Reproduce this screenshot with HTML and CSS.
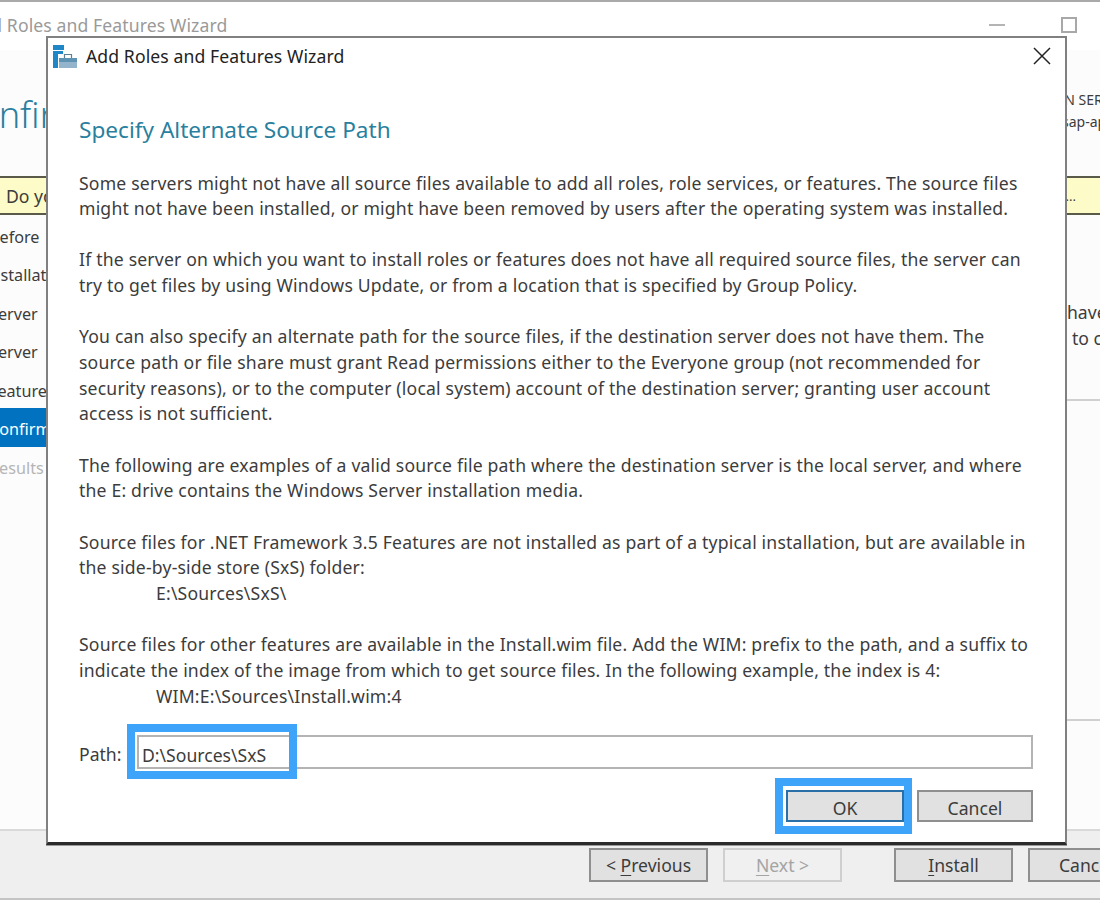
FILE: index.html
```html
<!DOCTYPE html>
<html lang="en">
<head>
<meta charset="utf-8">
<title>Add Roles and Features Wizard</title>
<link rel="stylesheet" href="styles.css">
</head>
<body>
<div class="window">
  <div class="win-title">
    <span class="win-title-text">Add Roles and Features Wizard</span>
    <span class="win-min"></span>
    <span class="win-max"></span>
  </div>
  <div class="win-main">
    <div class="win-head">
      <div class="win-heading">Confirmation</div>
      <div class="win-dest">DESTINATION SERVER<br><span class="win-host">sap-app</span></div>
    </div>
    <div class="win-banner">
      <span class="win-banner-text">Do you need to specify an alternate source path?</span>
      <span class="win-banner-more">...</span>
    </div>
    <div class="win-body">
      <ul class="steps">
        <li>Before You Begin</li>
        <li class="step-in">Installation Type</li>
        <li>Server Selection</li>
        <li>Server Roles</li>
        <li>Features</li>
        <li class="step-on">Confirmation</li>
        <li class="step-off">Results</li>
      </ul>
      <div class="win-right">
        <div class="win-right-a">have<br><span class="win-right-b">to c</span></div>
        <div class="win-right-c"></div>
      </div>
    </div>
  </div>
  <div class="win-foot">
    <button class="btn">&lt; <u>P</u>revious</button>
    <button class="btn btn-off"><u>N</u>ext &gt;</button>
    <button class="btn btn-install"><u>I</u>nstall</button>
    <button class="btn btn-clip">Cancel</button>
  </div>
</div>

<div class="dialog">
  <div class="dlg-title">
    <svg class="dlg-icon" viewBox="0 0 24 24" width="24" height="24" aria-hidden="true">
      <rect x="0" y="0" width="11" height="5" fill="#1f86c8"/>
      <rect x="0" y="6" width="10" height="3" fill="#1f86c8"/>
      <rect x="0" y="9" width="5" height="14" fill="#1f86c8"/>
      <path d="M6 13h18v4H6z" fill="#5f93b3"/>
      <path d="M6 17h18v6H6z" fill="#93b4ca"/>
      <path d="M11.5 13V9.5h7V13" fill="none" stroke="#5f7f95" stroke-width="1.2"/>
    </svg>
    <span class="dlg-title-text">Add Roles and Features Wizard</span>
    <svg class="dlg-close" viewBox="0 0 18 18" width="18" height="18" aria-hidden="true">
      <path d="M1 1l16 16M17 1L1 17" fill="none" stroke="#222" stroke-width="1.5"/>
    </svg>
  </div>
  <div class="dlg-body">
    <h2 class="dlg-h">Specify Alternate Source Path</h2>
    <p>Some servers might not have all source files available to add all roles, role services, or features. The source files<br>might not have been installed, or might have been removed by users after the operating system was installed.</p>
    <p>If the server on which you want to install roles or features does not have all required source files, the server can<br>try to get files by using Windows Update, or from a location that is specified by Group Policy.</p>
    <p>You can also specify an alternate path for the source files, if the destination server does not have them. The<br>source path or file share must grant Read permissions either to the Everyone group (not recommended for<br>security reasons), or to the computer (local system) account of the destination server; granting user account<br>access is not sufficient.</p>
    <p>The following are examples of a valid source file path where the destination server is the local server, and where<br>the E: drive contains the Windows Server installation media.</p>
    <p>Source files for .NET Framework 3.5 Features are not installed as part of a typical installation, but are available in<br>the side-by-side store (SxS) folder:<br><span class="indent">E:\Sources\SxS\</span></p>
    <p class="last">Source files for other features are available in the Install.wim file. Add the WIM: prefix to the path, and a suffix to<br>indicate the index of the image from which to get source files. In the following example, the index is 4:<br><span class="indent">WIM:E:\Sources\Install.wim:4</span></p>
    <div class="path-row">
      <label class="path-label" for="path">Path:</label>
      <input class="path-input" id="path" type="text" value="D:\Sources\SxS">
      <span class="mark mark-path"></span>
    </div>
    <div class="dlg-actions">
      <button class="btn btn-ok">OK<span class="mark mark-ok"></span></button>
      <button class="btn btn-cancel">Cancel</button>
    </div>
  </div>
</div>
</body>
</html>
```

FILE: styles.css
```css
* { box-sizing: border-box; }
html, body { margin: 0; padding: 0; height: 900px; overflow: hidden; background: #fff; }
body { position: relative; font-family: "Noto Sans", "Liberation Sans", sans-serif; color: #3c3c3c; }

.window {
  height: 900px;
  border-top: 2px solid #a9a9a9;
  border-bottom: 2px solid #c4c4c4;
  display: flex;
  flex-direction: column;
  overflow: hidden;
}
.win-title { height: 48px; flex: none; display: flex; align-items: center; position: relative; background: #fff; }
.win-title-text { margin-left: -31px; margin-top: -2px; font-size: 17.6px; letter-spacing: .1px; color: #9a9a9a; white-space: nowrap; }
.win-min { margin-left: auto; margin-right: 56px; margin-top: -2px; width: 16px; height: 2px; background: #b4b4b4; }
.win-max { margin-right: 23px; margin-top: -2px; width: 16px; height: 16px; border: 2px solid #a8a8a8; }

.win-main { flex: 1; display: flex; flex-direction: column; background: #fcfcfc; min-height: 0; }
.win-head { height: 126px; flex: none; display: flex; overflow: hidden; }
.win-heading { flex: none; width: 1029px; margin-left: -45px; margin-top: 43px; font-size: 36px; line-height: 44px; font-weight: 300; color: #2a7f9e; white-space: nowrap; }
.win-dest { flex: none; margin-top: 39px; font-size: 14px; line-height: 22px; color: #3c3c3c; white-space: nowrap; }
.win-host { display: inline-block; padding-left: 78px; }

.win-banner { height: 39px; flex: none; display: flex; align-items: center; background: #fdfbc8; border-top: 2px solid #5a5a48; border-bottom: 2px solid #5a5a48; font-size: 17.6px; color: #3c3c3c; overflow: hidden; }
.win-banner-text { margin-left: 6px; white-space: nowrap; }
.win-banner-more { margin-left: auto; margin-right: 24px; font-size: 13px; }

.win-body { flex: 1; display: flex; min-height: 0; }
.steps { list-style: none; margin: 0; padding: 1px 0 0; width: 46px; flex: none; overflow: hidden; font-size: 16.2px; word-spacing: 5px; line-height: 34.45px; white-space: nowrap; color: #3c3c3c; }
.steps li { padding-top: 4px; text-indent: -11px; }
.steps .step-in { text-indent: -15px; }
.steps .step-on { background: #0072c0; color: #fff; }
.steps .step-off { color: #b5b5b5; }
.win-right { flex: 1; min-width: 0; display: flex; flex-direction: column; align-items: flex-end; }
.win-right-a { width: 33px; margin-top: 84px; font-size: 17.6px; line-height: 26px; white-space: nowrap; overflow: hidden; color: #3c3c3c; }
.win-right-b { padding-left: 5px; }
.win-right-c { width: 33px; height: 322px; flex: none; margin-top: 48px; border-top: 2px solid #d0d0d0; border-bottom: 2px solid #d0d0d0; }

.win-foot { height: 69px; flex: none; display: flex; align-items: flex-start; padding: 17px 0 0 589px; background: #efefef; border-top: 2px solid #d9d9d9; overflow: hidden; }

.btn { font: inherit; font-size: 17.6px; line-height: 1; height: 34px; width: 119px; flex: none; padding: 2px 0 0; background: #e1e1e1; border: 2px solid #8f8f8f; color: #3c3c3c; position: relative; }
.btn u { text-underline-offset: 3px; }
.btn-off { margin-left: 15px; background: #f0f0f0; border-color: #cfcfcf; color: #a4a4a4; }
.btn-install { margin-left: 52px; }
.btn-clip { margin-left: 15px; text-align: left; padding-left: 29px; }

.dialog {
  position: absolute;
  left: 46px;
  top: 36px;
  width: 1021px;
  height: 809px;
  background: #fff;
  border: 2px solid #808080;
  border-bottom: 3px solid #2b2b2b;
  display: flex;
  flex-direction: column;
  box-shadow: 0 1px 0 #999;
}
.dlg-title { height: 36px; flex: none; display: flex; align-items: center; padding: 0 14px 0 5px; }
.dlg-icon { flex: none; margin-top: 2px; }
.dlg-title-text { margin-left: 9px; font-size: 17.6px; letter-spacing: .1px; color: #222; white-space: nowrap; }
.dlg-close { margin-left: auto; flex: none; }

.dlg-body { flex: 1; padding: 0 32px 0 31px; display: flex; flex-direction: column; min-height: 0; }
.dlg-h { margin: 39px 0 23.5px; height: 34px; font-size: 22.6px; line-height: 34px; font-weight: 400; color: #2a7f9e; white-space: nowrap; }
.dlg-body p { margin: 0 0 25.65px; font-size: 17.6px; letter-spacing: .19px; line-height: 25.65px; white-space: nowrap; color: #3c3c3c; }
.dlg-body p.last { margin-bottom: 25.5px; }
.indent { padding-left: 77px; }

.path-row { display: flex; align-items: center; height: 34px; position: relative; }
.path-label { font-size: 17.6px; width: 58px; flex: none; padding-top: 5px; color: #3c3c3c; }
.path-input { flex: 1; min-width: 0; height: 34px; font: inherit; font-size: 17.6px; color: #3c3c3c; padding: 6px 3px 0; border: 2px solid #b4b4b4; background: #fff; outline: 0; }

.dlg-actions { display: flex; justify-content: flex-end; gap: 13px; margin-top: 21px; }
.btn-ok { width: 118px; height: 32px; padding-top: 6px; border-color: #2a70a8; outline: 2px solid #fff; }
.btn-cancel { width: 116px; height: 32px; padding-top: 6px; }

.mark { position: absolute; border: 8px solid #3ea4fa; pointer-events: none; }
.mark-path { left: 48px; top: -11px; width: 170px; height: 55px; }
.mark-ok { left: -13px; top: -14px; width: 137px; height: 56px; }
```
